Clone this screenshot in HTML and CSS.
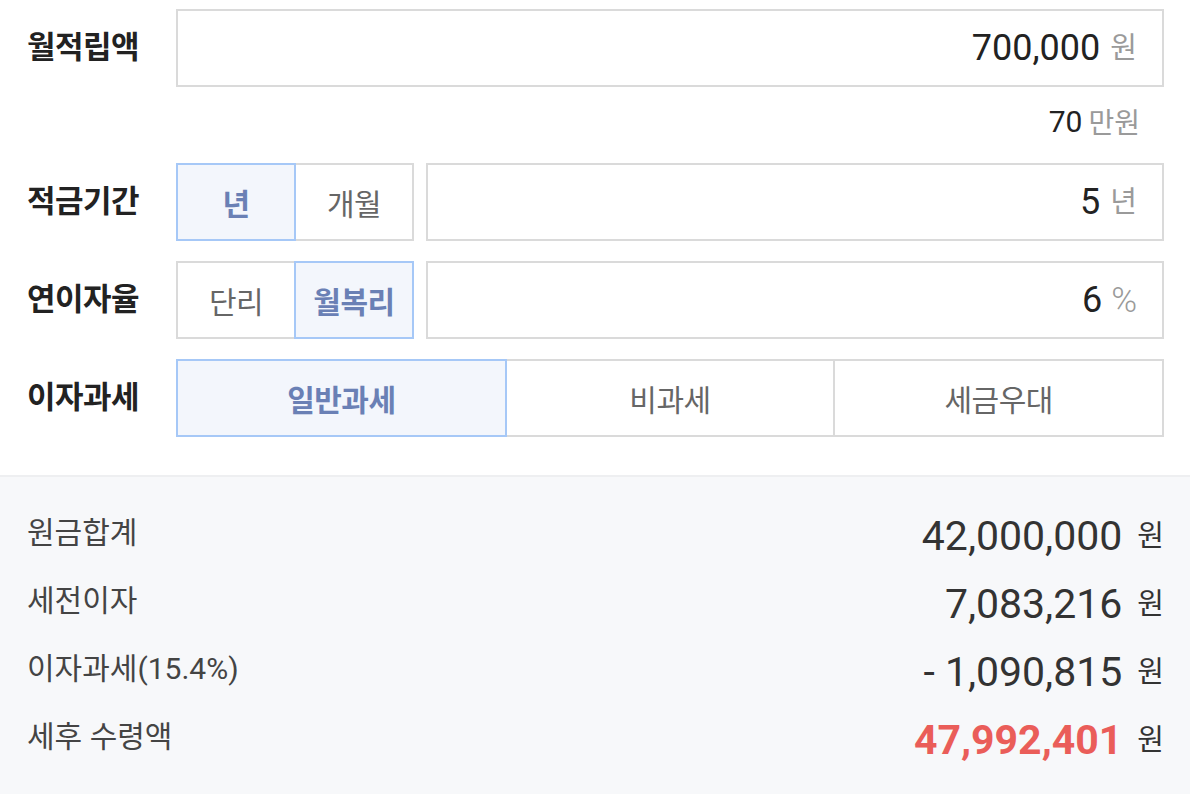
FILE: index.html
```html
<!DOCTYPE html>
<html lang="ko">
<head>
<meta charset="utf-8">
<title>적금 계산기</title>
<link rel="stylesheet" href="styles.css">
</head>
<body>
<div class="calc">
  <section class="form">
    <div class="row">
      <div class="label">월적립액</div>
      <div class="input"><span class="val">700,000</span><span class="unit">원</span></div>
    </div>
    <div class="hint"><span class="hint-num">70</span><span class="hint-unit">만원</span></div>

    <div class="row gap">
      <div class="label">적금기간</div>
      <div class="seg seg-small">
        <button class="opt active">년</button>
        <button class="opt">개월</button>
      </div>
      <div class="input"><span class="val">5</span><span class="unit">년</span></div>
    </div>

    <div class="row gap">
      <div class="label">연이자율</div>
      <div class="seg seg-small">
        <button class="opt">단리</button>
        <button class="opt active">월복리</button>
      </div>
      <div class="input"><span class="val">6</span><span class="unit pct">%</span></div>
    </div>

    <div class="row">
      <div class="label">이자과세</div>
      <div class="seg seg-full">
        <button class="opt active">일반과세</button>
        <button class="opt">비과세</button>
        <button class="opt">세금우대</button>
      </div>
    </div>
  </section>

  <section class="result">
    <div class="res-row">
      <div class="res-label">원금합계</div>
      <div class="res-amount"><span class="res-num">42,000,000</span><span class="res-unit">원</span></div>
    </div>
    <div class="res-row">
      <div class="res-label">세전이자</div>
      <div class="res-amount"><span class="res-num">7,083,216</span><span class="res-unit">원</span></div>
    </div>
    <div class="res-row">
      <div class="res-label">이자과세(15.4%)</div>
      <div class="res-amount"><span class="res-num">- 1,090,815</span><span class="res-unit">원</span></div>
    </div>
    <div class="res-row">
      <div class="res-label">세후 수령액</div>
      <div class="res-amount"><span class="res-num total">47,992,401</span><span class="res-unit">원</span></div>
    </div>
  </section>
</div>
</body>
</html>
```

FILE: styles.css
```css
* { box-sizing: border-box; }

html, body {
  margin: 0;
  padding: 0;
  background: #ffffff;
}

body {
  font-family: Roboto, "Noto Sans CJK KR", sans-serif;
  color: #222222;
  width: 1190px;
}

.form {
  padding: 9px 26px 38px 27px;
}

.row {
  display: flex;
  align-items: center;
  height: 78px;
}

.row.gap {
  margin-bottom: 20px;
}

.label {
  width: 149px;
  flex: none;
  font-size: 31px;
  font-weight: 700;
  color: #222222;
  line-height: 1;
  letter-spacing: -0.5px;
  padding-bottom: 2px;
}

.input {
  flex: 1;
  height: 78px;
  border: 2px solid #dadada;
  background: #ffffff;
  display: flex;
  justify-content: flex-end;
  align-items: center;
  padding-right: 25px;
}

.input .val {
  font-size: 36px;
  color: #222222;
  line-height: 1;
}

.input .unit {
  font-size: 29px;
  color: #9a9a9a;
  margin-left: 10px;
  line-height: 1;
}

.input .unit.pct {
  font-size: 35px;
  font-weight: 300;
  margin-left: 9px;
}

.hint {
  display: flex;
  justify-content: flex-end;
  align-items: center;
  height: 76px;
  padding: 0 24px 8px 0;
}

.hint-num {
  font-size: 30px;
  color: #222222;
}

.hint-unit {
  font-size: 28px;
  color: #9a9a9a;
  margin-left: 6px;
}

.seg {
  display: flex;
  height: 78px;
}

.seg-small {
  width: 238px;
  margin-right: 12px;
  flex: none;
}

.seg-full {
  flex: 1;
}

.opt {
  flex: 1;
  height: 78px;
  margin: 0;
  padding: 0;
  border: 2px solid #dadada;
  background: #ffffff;
  font-family: Roboto, "Noto Sans CJK KR", sans-serif;
  font-size: 30px;
  font-weight: 400;
  color: #666666;
  letter-spacing: -0.5px;
  cursor: pointer;
}

.opt + .opt {
  margin-left: -2px;
}

.opt.active {
  position: relative;
  z-index: 1;
  border-color: #a6c8f7;
  background: #f3f6fc;
  color: #6a80b5;
  font-weight: 700;
}

.result {
  border-top: 2px solid #eeeff1;
  background: #f7f8fa;
  padding: 25px 26px 20px 27px;
}

.res-row {
  display: flex;
  justify-content: space-between;
  align-items: center;
  height: 68px;
}

.res-label {
  font-size: 30px;
  color: #444444;
  line-height: 1;
  padding-bottom: 6px;
}

.res-amount {
  display: flex;
  align-items: center;
}

.res-num {
  font-size: 41px;
  color: #333333;
  line-height: 1;
}

.res-num.total {
  color: #ea5d59;
  font-weight: 700;
}

.res-unit {
  font-size: 29px;
  color: #333333;
  margin-left: 15px;
  line-height: 1;
}
```
